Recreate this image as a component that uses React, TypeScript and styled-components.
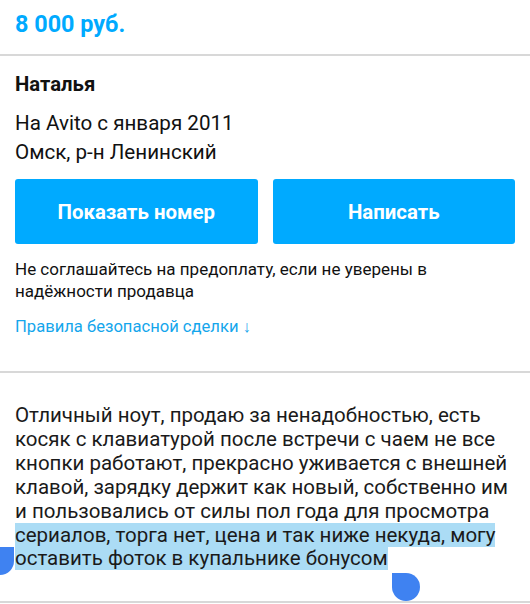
import styled, { createGlobalStyle } from "styled-components";

const GlobalStyle = createGlobalStyle`
  html, body {
    margin: 0;
    padding: 0;
    background: #fff;
  }
  body {
    font-family: Roboto, "Noto Sans", Arial, sans-serif;
    color: #111;
    -webkit-font-smoothing: antialiased;
  }
`;

const Page = styled.div`
  width: 530px;
  overflow: hidden;
  background: #fff;
`;

const Section = styled.section<{ $top: number; $bottom: number }>`
  padding: ${(p) => p.$top}px 15px ${(p) => p.$bottom}px;
  border-bottom: 2px solid #d8d8d8;
`;

const Price = styled.div`
  font-size: 23.4px;
  font-weight: 700;
  line-height: 27px;
  color: #00aaff;
`;

const SellerName = styled.div`
  font-size: 20.3px;
  font-weight: 700;
  line-height: 23.4px;
`;

const SellerInfo = styled.div`
  margin-top: 13.2px;
  font-size: 20.6px;
  line-height: 29px;
`;

const Actions = styled.div`
  display: grid;
  grid-template-columns: 1fr 1fr;
  gap: 15px;
  margin-top: 12px;
`;

const ActionButton = styled.button`
  height: 65px;
  border: 0;
  border-radius: 3px;
  background: #00aaff;
  color: #fff;
  font-family: inherit;
  font-size: 20.4px;
  font-weight: 700;
`;

const Warning = styled.p`
  margin: 14.4px 0 0;
  font-size: 17px;
  line-height: 22px;
`;

const SafetyLink = styled.a`
  display: block;
  margin-top: 13.5px;
  font-size: 16.6px;
  line-height: 22px;
  color: #14a6ec;
  text-decoration: none;
`;

const LINE = 23.9;

const Description = styled.p`
  margin: 0;
  font-size: 20.5px;
  line-height: ${LINE}px;
  color: #1a1a1a;
`;

const Selected = styled.span`
  background: #abdcf5;
`;

const Glue = styled.span`
  white-space: nowrap;
`;

// zero-width marker the selection handles hang from
const Anchor = styled.span`
  position: relative;
  display: inline-block;
  width: 0;
  height: ${LINE}px;
  vertical-align: top;
`;

const Handle = styled.span<{ $side: "start" | "end" }>`
  position: absolute;
  top: ${(p) => (p.$side === "start" ? "100%" : "calc(100% + 2px)")};
  ${(p) => (p.$side === "start" ? "right: 1px;" : "left: 4px;")}
  width: 28px;
  height: 28px;
  background: #3f82f1;
  border-radius: ${(p) => (p.$side === "start" ? "50% 0 50% 50%" : "0 50% 50% 50%")};
`;

const App = () => {
  return (
    <Page>
      <GlobalStyle />
      <Section $top={11} $bottom={16}>
        <Price>8 000 руб.</Price>
      </Section>

      <Section $top={16.5} $bottom={33}>
        <SellerName>Наталья</SellerName>
        <SellerInfo>
          На Avito с января 2011
          <br />
          Омск, р-н Ленинский
        </SellerInfo>
        <Actions>
          <ActionButton>Показать номер</ActionButton>
          <ActionButton>Написать</ActionButton>
        </Actions>
        <Warning>
          Не соглашайтесь на предоплату, если не уверены в надёжности продавца
        </Warning>
        <SafetyLink href="#">Правила безопасной сделки ↓</SafetyLink>
      </Section>

      <Section $top={31} $bottom={29.7}>
        <Description>
          Отличный ноут, продаю за ненадобностью, есть косяк с клавиатурой после
          встречи с чаем не все кнопки работают, прекрасно уживается с внешней
          клавой, зарядку держит как новый, собственно им и пользовались от силы
          пол года для просмотра{" "}
          <Selected>
            <Glue>
              <Anchor>
                <Handle $side="start" />
              </Anchor>
              сериалов,
            </Glue>{" "}
            торга нет, цена и так ниже некуда, могу оставить фоток в купальнике{" "}
            <Glue>
              бонусом
              <Anchor>
                <Handle $side="end" />
              </Anchor>
            </Glue>
          </Selected>
        </Description>
      </Section>
    </Page>
  );
};

export default App;
